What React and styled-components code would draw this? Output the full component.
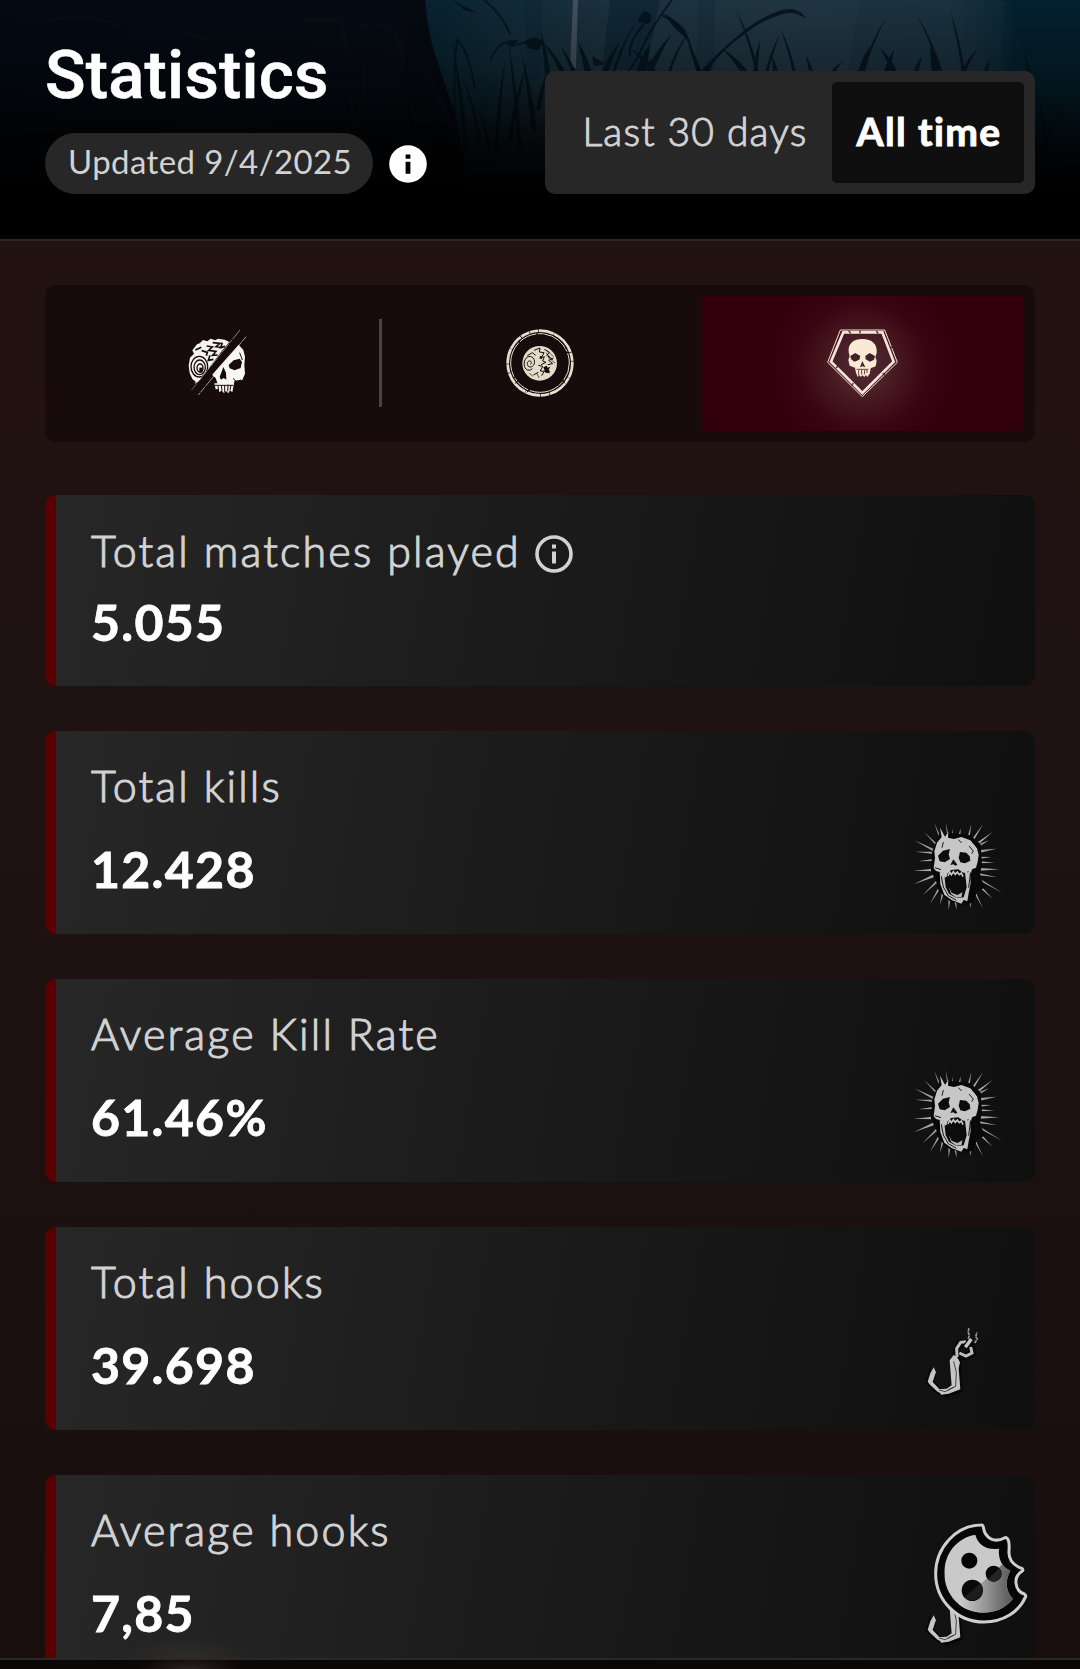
import React from 'react';
import styled, { createGlobalStyle, css } from 'styled-components';

const GlobalStyle = createGlobalStyle`
  * {
    box-sizing: border-box;
  }

  body {
    margin: 0;
    background: #1c1011;
    color: #fff;
    font-family: Lato, "Open Sans", sans-serif;
  }
`;

const Page = styled.div`
  position: relative;
  width: 1080px;
  height: 1669px;
  overflow: hidden;
  background: linear-gradient(#231212 240px, #1f1212 700px, #1b1010 1300px, #180e0e);
`;

const Header = styled.header`
  position: relative;
  display: flex;
  justify-content: space-between;
  align-items: flex-end;
  height: 241px;
  padding: 0 45px 45px;
  border-bottom: 2px solid #2b2525;
  background: #000;
`;

const Scene = styled.svg`
  position: absolute;
  top: 0;
  left: 0;
`;

const HeaderLeft = styled.div`
  position: relative;
`;

const PageTitle = styled.h1`
  margin: 0 0 23px;
  font-family: Roboto, sans-serif;
  font-size: 67px;
  font-weight: 500;
  line-height: 70px;
  letter-spacing: 0.2px;
  -webkit-text-stroke: 0.6px;
`;

const UpdatedRow = styled.div`
  display: flex;
  align-items: center;
  gap: 16px;
`;

const Pill = styled.span`
  width: 328px;
  height: 61px;
  padding-left: 23px;
  border-radius: 31px;
  background: #272727;
  color: #d2d2d2;
  font-size: 33px;
  line-height: 57px;
  letter-spacing: 0.4px;
  white-space: nowrap;
`;

const Toggle = styled.div`
  position: relative;
  display: flex;
  width: 490px;
  height: 123px;
  padding: 11px;
  border-radius: 10px;
  background: #272727;
`;

const ToggleButton = styled.button`
  flex: ${({ $active }) => ($active ? '0 0 192px' : '1')};
  padding: 0 0 3px 2px;
  border: 0;
  border-radius: 5px;
  background: ${({ $active }) => ($active ? '#0f0f0f' : 'transparent')};
  color: ${({ $active }) => ($active ? '#fff' : '#d2d2d2')};
  font-family: inherit;
  font-size: 39px;
  font-weight: ${({ $active }) => ($active ? 700 : 300)};
  -webkit-text-stroke: 1px;
  letter-spacing: ${({ $active }) => ($active ? 1.4 : 1.2)}px;
  white-space: nowrap;
`;

const Main = styled.main`
  padding: 44px 45px 0;
`;

const Tabs = styled.div`
  display: grid;
  grid-template-columns: repeat(3, 1fr);
  height: 157px;
  margin-bottom: 53px;
  padding: 11px;
  border-radius: 10px;
  background: #180b0c;
`;

const Tab = styled.div`
  position: relative;
  display: flex;
  align-items: center;
  justify-content: center;
  padding-bottom: 7px;

  ${({ $divider }) => $divider && css`
    padding-left: 5px;

    &::after {
      content: '';
      position: absolute;
      top: 23px;
      right: -3px;
      width: 3px;
      height: 88px;
      background: #4a4141;
    }
  `}

  ${({ $active }) => $active && css`
    border-radius: 4px;
    background:
      radial-gradient(circle 95px at 50% 52%, rgba(122, 92, 82, 0.6), rgba(108, 66, 64, 0.38) 35%, rgba(90, 35, 42, 0.15) 68%, transparent),
      #32000d;
  `}
`;

const CardList = styled.div`
  display: flex;
  flex-direction: column;
  gap: 45px;
`;

const Card = styled.section`
  display: flex;
  flex-shrink: 0;
  justify-content: space-between;
  align-items: flex-end;
  height: ${({ $compact }) => ($compact ? 191 : 203)}px;
  padding: 0 25px 14px 35px;
  border-left: 11px solid #5a0000;
  border-radius: 10px;
  background: linear-gradient(100deg, #272727, #1a1a1a 52%, #0f0f0f);
`;

const CardText = styled.div`
  align-self: flex-start;
  padding-top: ${({ $compact }) => ($compact ? 30 : 29)}px;
`;

const CardTitle = styled.h2`
  display: flex;
  align-items: center;
  gap: 13px;
  margin: 0;
  color: #d2d2d2;
  font-size: 43px;
  font-weight: 300;
  line-height: 52px;
  letter-spacing: 2.15px;
  white-space: nowrap;
  -webkit-text-stroke: 1.1px;
`;

const CardValue = styled.div`
  margin-top: ${({ $compact }) => ($compact ? 15 : 27)}px;
  font-size: 50px;
  font-weight: 700;
  line-height: 60px;
  letter-spacing: 1.3px;
  -webkit-text-stroke: 0.8px;
`;

const BottomBar = styled.div`
  position: absolute;
  left: 0;
  right: 0;
  bottom: 0;
  height: 11px;
  border-top: 2px solid #2a2726;
  background: radial-gradient(ellipse 50px 14px at 190px 9px, #2a211f, transparent), #0c0707;
`;

const BottomGlow = styled.div`
  position: absolute;
  left: 120px;
  bottom: 11px;
  width: 140px;
  height: 22px;
  background: radial-gradient(ellipse at 50% 120%, rgba(95, 85, 75, 0.22), transparent 70%);
`;

const CookieButton = styled.div`
  position: absolute;
  left: 910px;
  top: 1500px;
  width: 130px;
  height: 169px;
`;

const InfoMark = styled.svg`
  margin-top: 6px;
`;

const InfoSolid = () => (
  <svg width="38" height="38" viewBox="0 0 38 38">
    <circle cx="19" cy="19" r="18.8" fill="#fff" />
    <path d="M16.6 9.4h4.8v4.3h-4.8zM16.6 16.8h4.8v12h-4.8z" fill="#000" />
  </svg>
);

const InfoOutline = () => (
  <InfoMark width="40" height="40" viewBox="0 0 40 40">
    <circle cx="20" cy="20" r="17" fill="none" stroke="#d2d2d2" strokeWidth="3.6" />
    <path d="M18 10.6h4v4h-4zM18 17.6h4v12h-4z" fill="#d2d2d2" />
  </InfoMark>
);

// [root x, root y, tip x, tip y, width]
const blades = [
  [548, 78, 541, 32, 5], [566, 80, 541, 40, 6], [590, 80, 578, 42, 7], [575, 76, 560, 46, 5],
  [604, 76, 620, 42, 6], [612, 78, 636, 22, 3], [640, 78, 650, 44, 10], [648, 76, 672, 34, 7],
  [655, 74, 630, 48, 7], [636, 76, 662, 54, 9], [700, 76, 688, 44, 5], [668, 76, 690, 30, 3],
  [705, 74, 714, 60, 8], [748, 78, 722, 48, 8], [758, 76, 736, 10, 3], [755, 74, 760, 40, 4],
  [766, 76, 780, 34, 3], [795, 76, 780, 28, 3], [776, 76, 772, 56, 5], [812, 76, 806, 56, 4],
  [862, 76, 887, 16, 3], [860, 76, 870, 46, 6], [896, 76, 880, 48, 6], [886, 76, 894, 50, 6],
  [915, 76, 922, 56, 5], [942, 76, 916, 14, 3], [936, 76, 930, 46, 7], [964, 76, 950, 10, 3],
  [962, 76, 978, 48, 4], [985, 74, 990, 60, 4], [832, 74, 842, 62, 4], [1034, 100, 1024, 52, 5],
  [1050, 180, 1038, 90, 4], [1042, 150, 1064, 110, 3], [1058, 180, 1074, 140, 3],
  [460, 150, 404, 36, 4], [466, 150, 452, 40, 4], [480, 140, 462, 76, 3], [496, 150, 505, 60, 4],
  [510, 140, 528, 60, 4], [520, 150, 508, 40, 4], [534, 130, 522, 55, 5], [538, 110, 552, 60, 4],
  [430, 150, 442, 90, 3], [418, 160, 408, 80, 3], [490, 150, 478, 110, 3],
];

const bladePath = ([x, y, tx, ty, w]) => {
  const mx = x + (tx - x) * 0.35;
  const my = y + (ty - y) * 0.55;
  return `M${x - w / 2} ${y}Q${mx - w / 2} ${my} ${tx} ${ty}Q${mx + w / 2} ${my} ${x + w / 2} ${y}z`;
};

// Night forest with grass behind the header controls
const ForestScene = () => (
  <Scene width="1080" height="239" viewBox="0 0 1080 239">
    <defs>
      <linearGradient id="sky" x1="0" x2="1" y1="0" y2="0">
        <stop offset="0" stopColor="#030a13" />
        <stop offset="0.38" stopColor="#060b13" />
        <stop offset="0.395" stopColor="#08222f" />
        <stop offset="0.48" stopColor="#122b38" />
        <stop offset="0.55" stopColor="#1a303d" />
        <stop offset="0.72" stopColor="#203542" />
        <stop offset="0.88" stopColor="#1d3543" />
        <stop offset="0.94" stopColor="#042230" />
        <stop offset="1" stopColor="#042330" />
      </linearGradient>
      <linearGradient id="fade" x1="0" x2="0" y1="0" y2="1">
        <stop offset="0" stopColor="#000" stopOpacity="0" />
        <stop offset="0.28" stopColor="#000" stopOpacity="0.25" />
        <stop offset="0.6" stopColor="#000" stopOpacity="0.82" />
        <stop offset="0.8" stopColor="#000" />
      </linearGradient>
    </defs>
    <rect width="1080" height="239" fill="url(#sky)" />
    <path d="M405 0h20q4 40 12 60l20 60 20 119H405z" fill="#050a11" />
    <path d="M358 30q18-14 38 2l8 30-12 26M300 20h40l8 30M310 90q20-10 40 0l4 40M365 60l-4 50M50 20q40-8 70 6M180 30l30 10M240 100l40 4" fill="none" stroke="#0e141b" strokeWidth="3" opacity=".4" />
    <path d="M524 0h18l-2 80h-12z" fill="#0d2735" opacity=".6" />
    <path d="M610 0h50l-14 70h-44z" fill="#0c2432" opacity=".7" />
    <path d="M573 0h5l-2 68h-6z" fill="#6c6f79" opacity=".5" />
    <path d="M697 0h18v70h-18z" fill="#152d3a" opacity=".6" />
    <path d="M860 0h145l-4 70H848z" fill="#172d3a" opacity=".4" />
    <path d="M1002 0l8 4 2 10 8 10-6 8 8 14-8 10 8 14-8 10h86V0z" fill="#04202e" />
    <g fill="#06131d" opacity=".9">
      <path d={blades.map(bladePath).join('')} />
      <path d="M700 72q18-20 40-38t42-24q16-4 24 8l-3-1q-9-6-20-3-22 6-40 21-20 14-38 38zM665 14q14 8 20 16l4 10q-16-10-24-26zM638 22q4-16 12-8 4 8-4 10zM452 0l26 13-14-3z" />
      <path d="M524 42q10-8 20 0l-6 8-10-2zM506 41l12-1-4 5zM592 56l14 8-12 2z" />
    </g>
    <g fill="none" stroke="#06131d" strokeWidth="2" opacity=".85">
      <path d="M672 0q-20 26-30 48t-18 28M662 15q24 12 30 36l8 24M644 24q-16 18-14 32M484 0q18 14 26 34M490 60q12-24 22-14l22-6M455 120q-2-50 2-80 12 10 18 50" />
    </g>
    <rect width="1080" height="239" fill="url(#fade)" />
  </Scene>
);

const SlashedSkull = () => (
  <svg width="120" height="100" viewBox="0 0 360 300">
    <path d="M186 122l22-26-14-7-20-3-8 5-14-5-10 8-13-4-10 10-8 3-14 18 5 10-12 12-4 24 3 22 8 18 10 8-3 7 16-12z" fill="#f4f3f0" />
    <g fill="none" stroke="#180b0c" strokeWidth="4">
      <ellipse cx="118" cy="170" rx="25" ry="31" />
      <ellipse cx="119" cy="172" rx="17" ry="22" />
      <ellipse cx="120" cy="174" rx="9" ry="12" />
      <path d="M140 108l17 3-11 10 22 3-10 12 15-1M158 98l22 2-12 10 15 2M187 98l-5 15 13-4M125 122l17 5-3 10M106 120l18-8M150 136l-5 15 15-3" strokeWidth="5" />
    </g>
    <path d="M118 173h10v15h-10z" fill="#180b0c" />
    <path d="M236 104l14 16 5 20-2 25 2 26-8 19-23 2-4 14-8-4-10 8-12-6-12 5-6-10-5-15-11-10z" fill="#f7f6f2" />
    <path d="M206 165l15-14 18-5 7 10-4 18-18 7-15-6zM190 171l8 17 1 21-8-5-8 5-4-8z" fill="#180b0c" />
    <path d="M220 205l8 10 15-5M239 128l8 22" fill="none" stroke="#180b0c" strokeWidth="3" />
    <path d="M163 220l59-1-5 28-7-6-5 9-7-7-6 6-7-7-7 4-3-9-8 1z" fill="#f7f6f2" />
    <path d="M164 226h56M174 227l2 15M184 225l2 19M194 226v21M204 224l-1 20M213 225l-3 15" stroke="#180b0c" strokeWidth="3" />
    <path d="M240 60L95 240" stroke="#c9b7ac" strokeWidth="2" strokeDasharray="35 3 12 2" />
    <path d="M246 73L101 247" stroke="#180b0c" strokeWidth="17" />
    <path d="M258 80L115 255" stroke="#e8dfd8" strokeWidth="2" strokeDasharray="20 2 40 3" />
  </svg>
);

const SurvivorBadge = () => (
  <svg width="100" height="100" viewBox="0 0 300 300">
    <g fill="none" stroke="#e7dfcf">
      <circle cx="150" cy="159" r="97" strokeWidth="8" strokeDasharray="46 1 75 2 25 2" />
      <circle cx="150" cy="159" r="88" strokeWidth="3" strokeDasharray="55 4 18 2 90 5" />
    </g>
    <circle cx="149" cy="160" r="52" fill="#e4dccb" />
    <g fill="none" stroke="#180b0c" strokeWidth="3">
      <path d="M127 176c-14 12-27-1-24-20s23-22 29-8-6 27-15 22-5-19 3-17 3 10 0 10" />
      <path d="M112 137l15-9 10 8M132 121l18-7-2 12 14 2-5 10M163 118l15 9-8 9 18 12M149 145l14-5-5 13 10 4-15 7M190 145l-14 6 12 10-15 3M145 166l13 3-7 14 12 1M130 195l15-8M155 197l9-15 14 7" />
      <path d="M172 122l20 20M168 128l20 22M174 142l22 18M140 190l8 14M118 190l10 8" strokeWidth="2" />
    </g>
    <path d="M160 172l10-5 3 6 8-3-5 9 5 8-14 2zM150 138l8 1-3 8-6-2z" fill="#180b0c" />
    <path d="M75 220l15-10M88 75l8 9M230 112l-7 6M225 220l-8-8M111 247l7-10" stroke="#180b0c" strokeWidth="3" />
  </svg>
);

const KillerBadge = () => (
  <svg width="120" height="110" viewBox="0 0 360 330">
    <g transform="translate(-338 -74)">
      <path d="M450 148h134l38 98-106 104L412 246z" fill="#43202a" opacity=".5" />
      <g fill="none" stroke="#f7e3d8">
        <path d="M450 149h133l38 97-105 103-104-103z" strokeWidth="3" />
        <path d="M459 156h117l34 88-94 94-94-94z" strokeWidth="8" />
      </g>
      <path d="M475 151l6 8M508 151l2 8M558 152l6 8M601 202l8-3M437 263l9-8M484 316l5-8M585 286l-8-8" stroke="#51252e" strokeWidth="4" />
      <path d="M475 216c-3-27 15-40 42-40s45 15 42 42l-4 13 4 10-3 17-15 6-3 16-7 10-4-6-5 6-6-5-5 5-5-7-4 7-5-13-3-15-16-6-4-17 4-11z" fill="#f9ead6" />
      <path d="M480 227l15-9 15 9-3 11-15 6-10-8zM525 227l13-9 16 9-3 11-12 6-13-7zM516 242l9 19-8-3-8 3z" fill="#43202a" />
      <path d="M499 267h35M505 270v14M514 268v15M523 269l-1 13M530 268v10" stroke="#67403e" strokeWidth="3" />
    </g>
  </svg>
);

// [tip x, tip y, base x, base y, half width]
const rays = [
  [43, 91, 100, 120, 3], [73, 67, 112, 106, 3], [103, 40, 122, 87, 3], [45, 125, 96, 128, 3],
  [55, 154, 98, 150, 3], [41, 182, 98, 180, 4], [41, 223, 100, 198, 4], [68, 256, 110, 215, 3],
  [90, 282, 116, 238, 3], [120, 284, 128, 250, 3], [146, 301, 148, 268, 3], [170, 300, 166, 274, 3],
  [137, 35, 144, 80, 2], [158, 55, 158, 82, 2], [182, 55, 178, 78, 3], [214, 42, 206, 80, 3],
  [249, 43, 221, 86, 3], [278, 66, 231, 102, 4], [267, 91, 239, 105, 3], [289, 116, 240, 124, 4],
  [274, 141, 241, 143, 3], [284, 158, 241, 157, 3], [298, 178, 240, 178, 4], [292, 202, 238, 193, 3],
  [306, 248, 236, 207, 3], [278, 267, 230, 219, 4], [250, 297, 220, 238, 3], [213, 295, 210, 270, 3],
];

const rayPath = ([tx, ty, bx, by, w]) => {
  const len = Math.hypot(bx - tx, by - ty);
  const nx = ((by - ty) / len) * w;
  const ny = ((tx - bx) / len) * w;
  return `M${tx} ${ty}L${bx + nx} ${by + ny}L${bx - nx} ${by - ny}z`;
};

const ScreamingSkull = () => (
  <svg width="110" height="110" viewBox="0 0 330 330">
    <path d={rays.map(rayPath).join('')} fill="#a3a3a3" />
    <path d="M108 95l14-36 12 17 10-8 66 7 32 28 4 58-6 34 14 38-24 12-8 32-28 8-46-12-32-30-10-40-13-20 3-55z" fill="#080808" />
    <path d="M111 98l14-17-5-28 15 27 10-14-1 17 18 4 22-6 27 10 20 24 5 19-3 21-5 18-12 5-2 10-11-4-3 6-17-3-18-2-15 4-8 11-9 3-2-14-23-6-7-8 4-31-2-20z" fill="#c6c6c6" />
    <path d="M114 137l15-15 21-5-4 16 4 14-16 10-15-3zM176 143l4-17 19 2 10 11 2 13-16 8-14-3zM151 165l9-17 12 16-6 3-6-4z" fill="#0c0c0c" />
    <path d="M141 192l12-12 22-2 15 11 7 18-2 40-13 15-19-5-16-14-9-22z" fill="#0c0c0c" />
    <path d="M144 198l5-12 5 8 6-9 6 8 6-7 6 8 6-5 5 11" fill="none" stroke="#c6c6c6" strokeWidth="5" />
    <path d="M119 183l13 4 5 44 10 20 22 13 22-2 9-30-5-44 15-3 2 34-6 31-4 24-11-4-7 11-28-10-23-17-12-31z" fill="#c1c1c1" />
    <path d="M146 231l9 17 17 7 15-8-2 13-16 3-16-12z" fill="#b6b6b6" />
    <path d="M124 199l6 32 15 26 24 14M211 191l-5 42M105 173l18 6M207 108l13 15-5 8M130 96l-4 17M175 89l10 10" fill="none" stroke="#171717" strokeWidth="3" />
    <path d="M218 182l22 34M222 196l9 34" stroke="#0b0b0b" strokeWidth="10" />
  </svg>
);

const MeatHook = () => (
  <svg width="110" height="110" viewBox="0 0 330 330">
    <g transform="translate(30 15)">
      <path d="M70 178l-12 34 28 28 25 7 35-12-3-65 3-38M140 130q0-30 15-35l28 10 4 22-25 10z" fill="none" stroke="#080808" strokeWidth="22" />
      <path d="M71 169l7 15-4 10-6 19 19 20-1 12-26-24-7-9 8-25z" fill="#c5c5c5" />
      <path d="M80 235l30-2 15-10-3-35-3-40 12-16 10 6 9 16-4 18 5 63-35 13-22 3z" fill="#c5c5c5" />
      <path d="M131 151l8 33-2 42-24 12M88 237l18 5 25-14" fill="none" stroke="#292929" strokeWidth="2.5" />
      <path d="M141 138l-1-26 12-18 16-2M148 126l20 9 18-9-4-18" fill="none" stroke="#bebebe" strokeWidth="9" />
      <path d="M163 110l22-27" stroke="#0c0c0c" strokeWidth="15" />
      <path d="M166 109l18-25" stroke="#c8c8c8" strokeWidth="10" />
      <path d="M175 84l3-12-4-9 3-11M194 96l8-12-5-6 4-15" fill="none" stroke="#969696" strokeWidth="5" strokeDasharray="10 2" />
    </g>
  </svg>
);

const Cookie = () => (
  <svg width="130" height="169" viewBox="0 0 390 507">
    <defs>
      <linearGradient id="shade" x1="150" x2="310" y1="0" y2="0" gradientUnits="userSpaceOnUse">
        <stop offset="0" stopColor="#ccc" />
        <stop offset="0.45" stopColor="#999" />
        <stop offset="1" stopColor="#555" />
      </linearGradient>
      <clipPath id="dough">
        <path d="M196 104C140 114 103 160 103 220c0 66 51 118 116 118 37 0 68-15 90-42-23-22-24-57-8-84-25-10-37-36-34-66-34 5-63-10-71-42z" />
      </clipPath>
    </defs>
    <path d="M213 75C138 76 77 143 77 221c0 80 64 145 145 145 58 0 105-30 125-76q1-5-4-8c-30-10-34-52-7-68q5-3 1-8c-28-10-42-27-40-53 1-15 2-28-4-36q-4-7-10-3c-29 15-58 2-63-32-1-6-3-8-7-7z" fill="#060606" stroke="#cfcfcf" strokeWidth="9" strokeLinejoin="round" />
    <g clipPath="url(#dough)">
      <path d="M90 90h240v260H90z" fill="#c9c9c9" />
      <path d="M300 172L120 336v20h220V160z" fill="url(#shade)" />
    </g>
    <circle cx="178" cy="182" r="24" fill="#050505" />
    <circle cx="251" cy="221" r="24" fill="#080808" />
    <path d="M268 204a24 24 0 0 1-34 34z" fill="#242424" />
    <circle cx="187" cy="271" r="32" fill="#090909" />
    <path d="M211 250a32 32 0 0 1-48 42z" fill="#1c1c1c" />
  </svg>
);

const stats = [
  { title: 'Total matches played', value: '5.055', info: true },
  { title: 'Total kills', value: '12.428', icon: <ScreamingSkull /> },
  { title: 'Average Kill Rate', value: '61.46%', icon: <ScreamingSkull /> },
  { title: 'Total hooks', value: '39.698', icon: <MeatHook /> },
  { title: 'Average hooks', value: '7,85', icon: <MeatHook /> },
];

const StatCard = ({ title, value, info, icon }) => {
  return (
    <Card $compact={info}>
      <CardText $compact={info}>
        <CardTitle>{title}{info && <InfoOutline />}</CardTitle>
        <CardValue $compact={info}>{value}</CardValue>
      </CardText>
      {icon}
    </Card>
  );
};

const App = () => {
  return (
    <Page>
      <GlobalStyle />
      <Header>
        <ForestScene />
        <HeaderLeft>
          <PageTitle>Statistics</PageTitle>
          <UpdatedRow>
            <Pill>Updated 9/4/2025</Pill>
            <InfoSolid />
          </UpdatedRow>
        </HeaderLeft>
        <Toggle>
          <ToggleButton>Last 30 days</ToggleButton>
          <ToggleButton $active>All time</ToggleButton>
        </Toggle>
      </Header>
      <Main>
        <Tabs>
          <Tab $divider><SlashedSkull /></Tab>
          <Tab><SurvivorBadge /></Tab>
          <Tab $active><KillerBadge /></Tab>
        </Tabs>
        <CardList>
          {stats.map((stat) => <StatCard key={stat.title} {...stat} />)}
        </CardList>
      </Main>
      <BottomGlow />
      <BottomBar />
      <CookieButton><Cookie /></CookieButton>
    </Page>
  );
};

export default App;
